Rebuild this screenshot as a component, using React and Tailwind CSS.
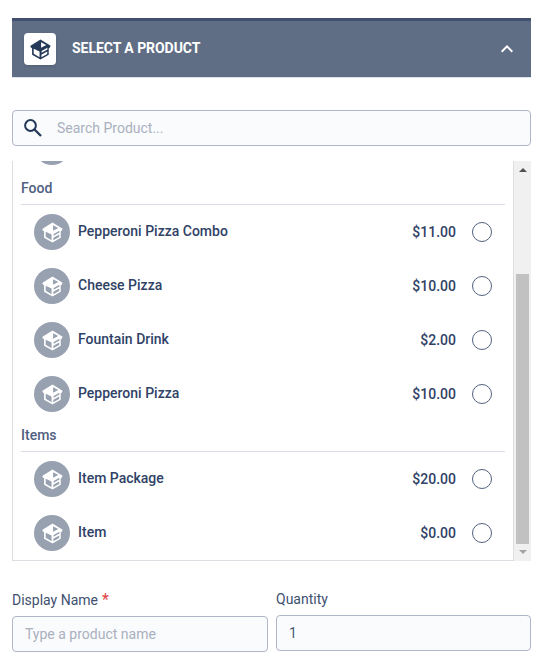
import { useState } from "react";

const groups = [
    {
        name: "Food",
        products: [
            { id: 1, name: "Pepperoni Pizza Combo", price: "$11.00" },
            { id: 2, name: "Cheese Pizza", price: "$10.00" },
            { id: 3, name: "Fountain Drink", price: "$2.00" },
            { id: 4, name: "Pepperoni Pizza", price: "$10.00" },
        ],
    },
    {
        name: "Items",
        products: [
            { id: 5, name: "Item Package", price: "$20.00" },
            { id: 6, name: "Item", price: "$0.00" },
        ],
    },
];

function BoxIcon({ className }) {
    return (
        <svg viewBox="0 0 24 24" className={className} fill="currentColor" fillRule="evenodd">
            {/* outline, roof opening, left side, flap gap, right side */}
            <path d="M12 1.6 22.6 8.2 21.6 10.3 20.6 10.9V17.5L12 22.4 3.2 17.5V11L1.3 9.1 2 7.7Z M12.6 4.4V10.2L18 7.2Z M4.9 11.1V16.5L11 20V14.2Z M13.2 13.6V15.3L19.2 11.9V10.3Z M12.9 17.5V20L19 16.6V14.1Z" />
        </svg>
    );
}

function ProductAvatar() {
    return (
        <div className="flex size-9 shrink-0 items-center justify-center rounded-full bg-[#98a1b0] text-white">
            <BoxIcon className="size-[23px]" />
        </div>
    );
}

function ProductRow({ product, selected, onSelect }) {
    return (
        <div onClick={onSelect} className="flex h-[54px] cursor-pointer items-center pr-[13px] pl-[13px]">
            <ProductAvatar />
            <span className="ml-2 pb-0.5 text-sm font-medium">{product.name}</span>
            <span className="ml-auto text-sm font-medium">{product.price}</span>
            <span className="ml-4 flex size-5 items-center justify-center rounded-full border border-[#52617e]">
                {selected && <span className="size-2.5 rounded-full bg-[#2f4266]" />}
            </span>
        </div>
    );
}

export default function App() {
    const [search, setSearch] = useState("");
    const [name, setName] = useState("");
    const [quantity, setQuantity] = useState("1");
    const [selectedId, setSelectedId] = useState(null);

    return (
        <section className="h-[663px] w-[540px] overflow-hidden bg-white pt-[18px] pr-[9px] pl-3 font-[Roboto,sans-serif] text-sm text-[#2f4266]">
            <div className="flex h-[60px] items-center border-t-[3px] border-b border-t-[#425070] border-b-[#dfe3ec] bg-[#5f6d85] pr-[17px] pl-3 text-white">
                <div className="flex size-8 items-center justify-center rounded bg-white text-[#243858] shadow-sm">
                    <BoxIcon className="size-[23px]" />
                </div>
                <h1 className="ml-4 pb-0.5 text-sm font-bold tracking-[-0.05px]">SELECT A PRODUCT</h1>
                <svg viewBox="0 0 14 10" className="ml-auto h-[10px] w-[14px]" fill="none" stroke="currentColor" strokeWidth="2">
                    <path d="M1.7 7.7 7 2.4 12.3 7.7" />
                </svg>
            </div>

            <div className="mt-8 flex h-9 items-center rounded border border-[#b0b6c8] bg-[#fafbfd] pl-[11px]">
                <svg viewBox="0 0 18 18" className="size-[18px] text-[#243858]" fill="none" stroke="currentColor" strokeWidth="2">
                    <circle cx="6.5" cy="6.5" r="5.4" />
                    <path d="M10.5 10.5 17 17" strokeWidth="2.3" />
                </svg>
                <input
                    type="text"
                    value={search}
                    onChange={(e) => setSearch(e.target.value)}
                    placeholder="Search Product..."
                    className="ml-[15px] flex-1 outline-none placeholder:text-[#a9b0be]"
                />
            </div>

            <div className="mt-[15px] flex h-[400px]">
                <div className="flex-1 overflow-hidden border-r border-b border-l border-[#dcdee4] px-2">
                    {/* last row of the group scrolled out of view */}
                    <div className="-mt-[41px] flex h-[54px] items-center pl-[13px]">
                        <ProductAvatar />
                    </div>
                    {groups.map((group) => (
                        <div key={group.name}>
                            <h2 className="h-[31px] border-b border-[#dcdee6] pt-1 text-sm font-medium text-[#506080]">{group.name}</h2>
                            {group.products.map((product) => (
                                <ProductRow
                                    key={product.id}
                                    product={product}
                                    selected={product.id === selectedId}
                                    onSelect={() => setSelectedId(product.id)}
                                />
                            ))}
                        </div>
                    ))}
                </div>
                <div className="flex w-[17px] flex-col items-center bg-[#f0f0f0]">
                    <svg viewBox="0 0 8 4" className="mt-[7px] h-1 w-2">
                        <path d="M0 4 4 0 8 4Z" fill="#505050" />
                    </svg>
                    <div className="mt-[102px] h-[270px] w-[13px] bg-[#c1c1c1]" />
                    <svg viewBox="0 0 8 4" className="mt-1.5 h-1 w-2">
                        <path d="M0 0 4 4 8 0Z" fill="#a3a3a3" />
                    </svg>
                </div>
            </div>

            <div className="mt-[28px] flex gap-2">
                <div className="w-64">
                    <label htmlFor="name" className="flex h-[27px] gap-1 pt-px text-sm text-[#405070]">
                        Display Name <span className="text-base/5 text-[#e04444]">*</span>
                    </label>
                    <input
                        id="name"
                        type="text"
                        value={name}
                        onChange={(e) => setName(e.target.value)}
                        placeholder="Type a product name"
                        className="h-9 w-full rounded border border-[#b0b6c8] bg-[#fafbfd] px-3 outline-none placeholder:text-[#a9b0be]"
                    />
                </div>
                <div className="flex-1">
                    <label htmlFor="quantity" className="block h-[26px] text-sm text-[#405070]">
                        Quantity
                    </label>
                    <input
                        id="quantity"
                        type="text"
                        value={quantity}
                        onChange={(e) => setQuantity(e.target.value)}
                        className="h-9 w-full rounded border border-[#b0b6c8] bg-[#fafbfd] px-3 text-[#4a5a78] outline-none"
                    />
                </div>
            </div>
        </section>
    );
}
